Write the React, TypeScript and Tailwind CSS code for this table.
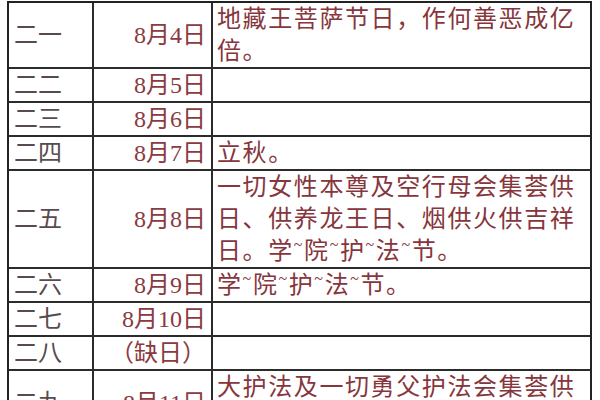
function Tilde() {
  return <span className="relative -top-[9px] text-[16px] tracking-[1.6px]">~</span>;
}

type Row = {
  day: string;
  date: string;
  lines: React.ReactNode[];
};

const rows: Row[] = [
  { day: "二一", date: "8月4日", lines: ["地藏王菩萨节日，作何善恶成亿", "倍。"] },
  { day: "二二", date: "8月5日", lines: [""] },
  { day: "二三", date: "8月6日", lines: [""] },
  { day: "二四", date: "8月7日", lines: ["立秋。"] },
  {
    day: "二五",
    date: "8月8日",
    lines: [
      "一切女性本尊及空行母会集荟供",
      "日、供养龙王日、烟供火供吉祥",
      <>
        日。学<Tilde />院<Tilde />护<Tilde />法<Tilde />节。
      </>,
    ],
  },
  {
    day: "二六",
    date: "8月9日",
    lines: [
      <>
        学<Tilde />院<Tilde />护<Tilde />法<Tilde />节。
      </>,
    ],
  },
  { day: "二七", date: "8月10日", lines: [""] },
  { day: "二八", date: "（缺日）", lines: [""] },
  { day: "二九", date: "8月11日", lines: ["大护法及一切勇父护法会集荟供", "日。"] },
];

export default function App() {
  return (
    <div className="w-[600px] h-[400px] overflow-hidden bg-white pl-[7px] pt-[1px]">
      <div
        className="w-[585px] border-2 border-b-0 border-[#222222] text-[24px] leading-[32px]"
        style={{ fontFamily: '"Liberation Serif", "Noto Sans CJK SC", serif' }}
      >
        {rows.map((r) => (
          <div key={r.day} className="grid grid-cols-[85px_119px_377px] border-b-2 border-[#2b2b2b]">
            <div className="flex items-center border-r-2 border-[#2b2b2b] pl-[5px] text-[#584b4f] whitespace-nowrap">
              {r.day}
            </div>
            <div className="flex items-center justify-end border-r-2 border-[#2b2b2b] pr-[5px] text-[#8a3a40] whitespace-nowrap">
              {r.date}
            </div>
            <div className="pl-[4px] text-[#86363c] tracking-[1.6px] whitespace-nowrap">
              {r.lines.map((l, i) => (
                <div key={i} className="h-[32px]">
                  {l}
                </div>
              ))}
            </div>
          </div>
        ))}
      </div>
    </div>
  );
}
